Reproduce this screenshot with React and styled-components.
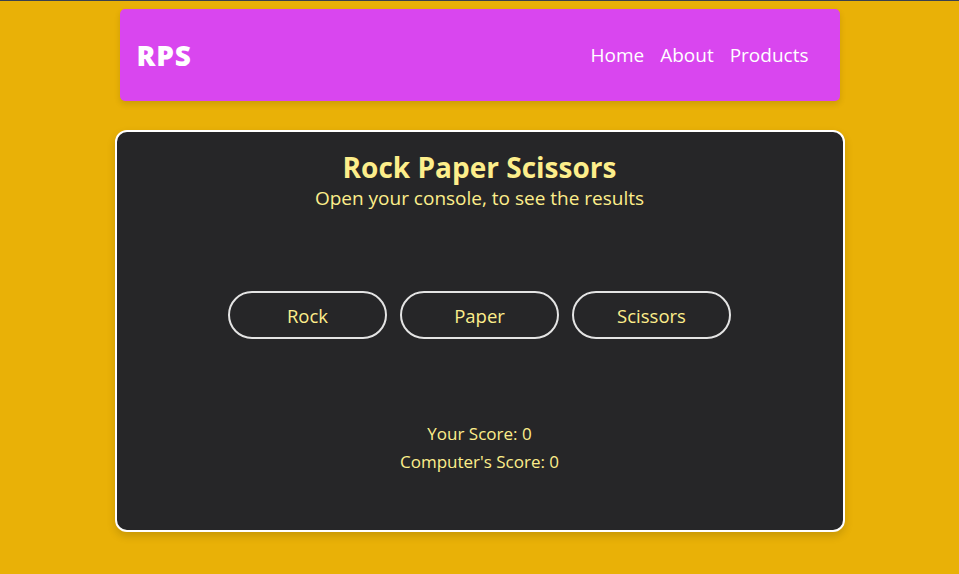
import styled, { createGlobalStyle } from 'styled-components';

const GlobalStyle = createGlobalStyle`
  html, body {
    margin: 0;
    padding: 0;
  }
  body {
    background: #e9b107;
    border-top: 1px solid #3a4150;
    font-family: 'Open Sans', 'Noto Sans', sans-serif;
    min-height: 100vh;
    box-sizing: border-box;
  }
`;

const Page = styled.div`
  display: flex;
  flex-direction: column;
  align-items: center;
  padding-top: 8px;
`;

const Navbar = styled.nav`
  width: 720px;
  height: 92px;
  box-sizing: border-box;
  background: #d946ef;
  border-radius: 5px;
  box-shadow: 0 3px 6px rgba(0, 0, 0, 0.12);
  display: flex;
  align-items: center;
  justify-content: space-between;
  padding: 0 31px 0 17px;
`;

const Logo = styled.div`
  color: #fff;
  font-family: 'Open Sans', sans-serif;
  font-weight: 800;
  font-size: 28px;
  letter-spacing: 0.8px;
`;

const Links = styled.div`
  display: flex;
  gap: 16px;
`;

const NavLink = styled.a`
  color: #fff;
  font-size: 19px;
  text-decoration: none;
  cursor: pointer;
`;

const Card = styled.main`
  margin-top: 29px;
  width: 730px;
  height: 402px;
  box-sizing: border-box;
  background: #262628;
  border: 2px solid #fff;
  border-radius: 12px;
  box-shadow: 0 4px 8px rgba(0, 0, 0, 0.15);
  display: flex;
  flex-direction: column;
  align-items: center;
  padding-top: 17px;
  color: #fdee8b;
`;

const Title = styled.h1`
  margin: 0;
  font-size: 28px;
  font-weight: 700;
  line-height: 36px;
`;

const Subtitle = styled.p`
  margin: 0;
  font-size: 19px;
  line-height: 26px;
`;

const ButtonRow = styled.div`
  display: flex;
  gap: 13px;
  margin-top: 80px;
`;

const Choice = styled.button`
  width: 159px;
  height: 48px;
  background: transparent;
  border: 2px solid #e4e4e4;
  border-radius: 999px;
  color: #fdee8b;
  font-family: inherit;
  font-size: 18.5px;
  cursor: pointer;
`;

const Scores = styled.div`
  margin-top: 81px;
  display: flex;
  flex-direction: column;
  align-items: center;
  font-size: 17px;
  line-height: 28px;
`;

export default function App() {
  return (
    <>
      <GlobalStyle />
      <Page>
        <Navbar>
          <Logo>RPS</Logo>
          <Links>
            <NavLink>Home</NavLink>
            <NavLink>About</NavLink>
            <NavLink>Products</NavLink>
          </Links>
        </Navbar>
        <Card>
          <Title>Rock Paper Scissors</Title>
          <Subtitle>Open your console, to see the results</Subtitle>
          <ButtonRow>
            <Choice>Rock</Choice>
            <Choice>Paper</Choice>
            <Choice>Scissors</Choice>
          </ButtonRow>
          <Scores>
            <div>Your Score: 0</div>
            <div>Computer's Score: 0</div>
          </Scores>
        </Card>
      </Page>
    </>
  );
}
